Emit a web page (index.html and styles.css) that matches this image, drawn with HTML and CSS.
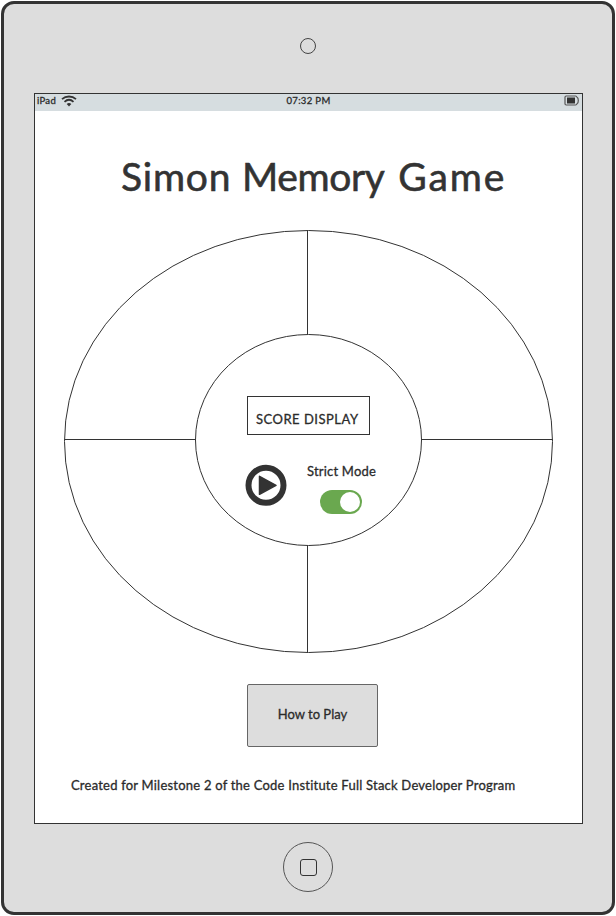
FILE: index.html
```html
<!DOCTYPE html>
<html lang="en">
<head>
<meta charset="utf-8">
<title>Simon Memory Game</title>
<link rel="stylesheet" href="styles.css">
</head>
<body>
<div class="tablet">
  <div class="camera"></div>
  <main class="screen">
    <header class="status">
      <div class="carrier"><span class="device">iPad</span>
        <svg class="wifi" width="16" height="12" viewBox="0 0 16 12"><path d="M1 4.200C5 .6 11 .6 15 4.200M3.500 6.800c2.700-2.400 6.300-2.400 9 0" fill="none" stroke="#333" stroke-width="1.800"/><path d="M5.700 9C7 7.800 9 7.800 10.300 9L8 11.500z" fill="#333"/></svg>
      </div>
      <span class="time">07:32 PM</span>
      <svg class="battery" width="16" height="11" viewBox="0 0 16 11"><path d="M2.200 1h9.300c1 0 1.100.9 1.600 1.200 1.600.8 1.600 5.700 0 6.500-.5.300-.6 1.300-1.600 1.300H2.200Q1 10 1 8.800V2.200Q1 1 2.200 1z" fill="none" stroke="#555" stroke-width="1.200"/><path d="M3 2.500h8v6H3z" fill="#333"/></svg>
    </header>
    <h1 class="title">Simon <span class="tight">Memory</span> <span class="wide">Game</span></h1>
    <section class="board">
      <svg class="rings" width="489" height="423" viewBox="0 0 489 423" fill="none" stroke="#333">
        <ellipse cx="244.500" cy="211.500" rx="244" ry="211"/>
        <ellipse cx="244.500" cy="210" rx="113" ry="105.500"/>
        <path d="M243.500 .5V104M243.500 315.500V422.500M.5 209.500H131M357.500 209.500H488.500"/>
      </svg>
      <div class="controls">
        <div class="score"><span>SCORE DISPLAY</span></div>
        <div class="row">
          <svg class="play" width="42" height="42" viewBox="0 0 42 42"><circle cx="21" cy="21.300" r="17.500" fill="none" stroke="#333" stroke-width="6"/><path d="M14.500 12.300L31 21.300 14.500 30.300z" fill="#333" stroke="#333" stroke-width="1.500" stroke-linejoin="round"/></svg>
          <div class="mode"><span class="label">Strict Mode</span><div class="toggle"><div class="knob"></div></div></div>
        </div>
      </div>
    </section>
    <button class="how"><span>How to Play</span></button>
    <footer class="credit"><span>Created for Milestone 2 of the Code Institute Full Stack Developer Program</span></footer>
  </main>
  <div class="home"><div class="square"></div></div>
</div>
</body>
</html>
```
FILE: styles.css
```css
* { box-sizing: border-box; }
body { margin: 0; background: #fff; color: #2b2b2b; font-family: Lato, sans-serif; font-size: 13px; font-weight: 400; line-height: 16px; -webkit-text-stroke: .3px #2b2b2b; }
.tablet { width: 614px; height: 914px; margin: 1px; border: 3px solid #333; border-radius: 13px; background: #ddd; display: flex; flex-direction: column; }
.camera { width: 16px; height: 16px; margin: 34px 0 0 296px; border: 1px solid #444; border-radius: 50%; flex: none; }
.screen { width: 549px; height: 731px; margin: 39px 0 0 30px; border: 1px solid #333; background: #fff; flex: none; display: flex; flex-direction: column; align-items: flex-start; }
.status { width: 100%; height: 17px; padding: 0 2px 4px; background: #d6dde0; display: grid; grid-template-columns: 1fr auto 1fr; align-items: center; font-size: 9.500px; line-height: 13px; }
.carrier { display: flex; align-items: center; gap: 5px; }
.device { letter-spacing: .3px; }
.time { letter-spacing: .35px; }
.battery { justify-self: end; }
.title { margin: 41px 0 0 86px; color: #333; font-size: 39px; font-weight: 400; line-height: 48px; letter-spacing: .8px; white-space: nowrap; -webkit-text-stroke: .6px #333; }
.tight { letter-spacing: -.4px; }
.wide { margin-left: 3px; letter-spacing: 1.900px; }
.board { width: 489px; height: 423px; margin: 30px 0 0 29px; display: grid; }
.rings, .controls { grid-area: 1 / 1; }
.controls { padding: 166px 0 0 183px; }
.score { width: 123px; height: 39px; padding: 14px 0 0 8px; border: 1px solid #333; letter-spacing: .5px; white-space: nowrap; }
.row { display: flex; margin-left: -2px; }
.play { margin-top: 29px; flex: none; }
.mode { margin: 28px 0 0 20px; display: flex; flex-direction: column; white-space: nowrap; }
.label { letter-spacing: .2px; }
.toggle { width: 42px; height: 24px; margin: 11px 0 0 13px; padding: 2px; border-radius: 12px; background: #6aa84f; display: flex; justify-content: flex-end; }
.knob { width: 20px; height: 20px; border-radius: 50%; background: #fff; }
.how { width: 131px; height: 63px; margin: 31px 0 0 212px; padding: 0 0 4px; border: 1px solid #666; border-radius: 2px; background: #ddd; color: inherit; font: inherit; -webkit-text-stroke: inherit; }
.credit { margin: 30px 0 0 36px; white-space: nowrap; letter-spacing: .22px; }
.home { width: 50px; height: 50px; margin: 18px 0 0 279px; border: 1px solid #555; border-radius: 50%; display: flex; align-items: center; justify-content: center; flex: none; }
.square { width: 17px; height: 17px; border: 1px solid #333; border-radius: 3px; }
```
